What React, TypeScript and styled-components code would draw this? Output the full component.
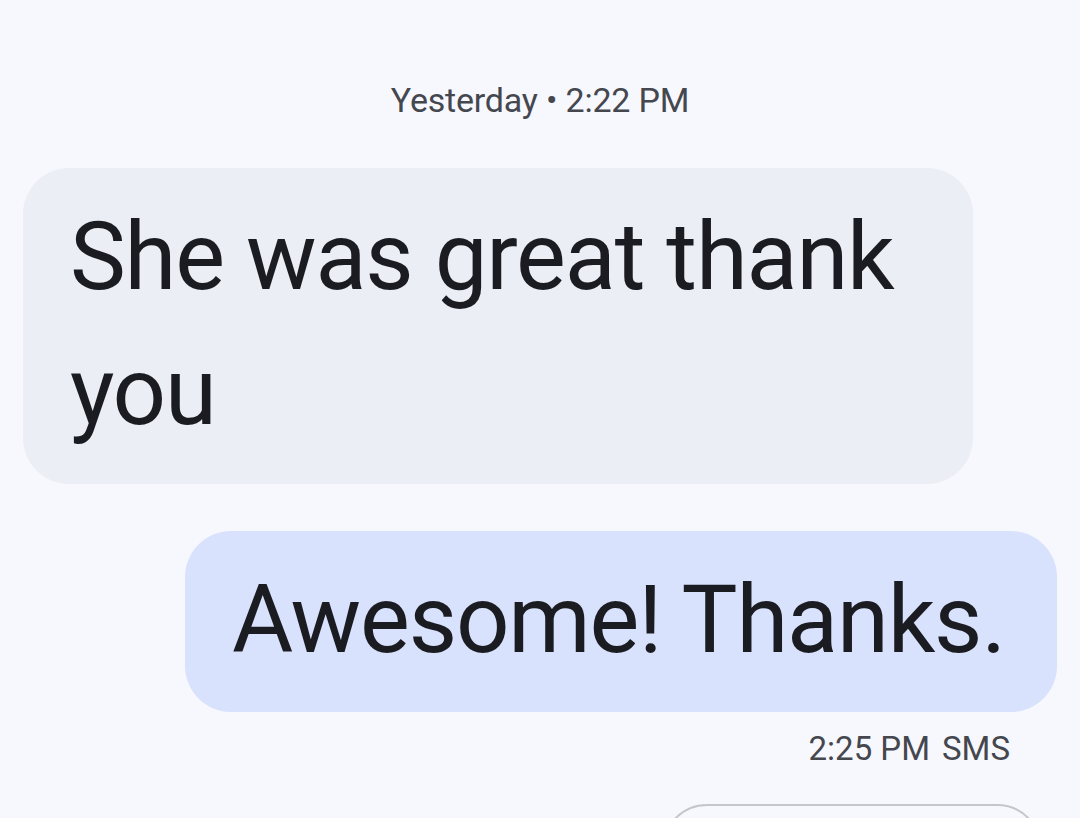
import React from 'react';
import styled, { createGlobalStyle } from 'styled-components';

const colors = {
  page: '#f7f8fd',
  incoming: '#eceef5',
  outgoing: '#d9e2fd',
  text: '#1b1c21',
  meta: '#45474f',
  outline: '#c5c6cc',
};

const GlobalStyle = createGlobalStyle`
  html, body {
    margin: 0;
    padding: 0;
    background: ${colors.page};
    overflow: hidden;
  }
  body {
    font-family: Roboto, "Noto Sans", sans-serif;
    color: ${colors.text};
  }
`;

const Thread = styled('main')`
  width: 1080px;
  height: 818px;
  display: flex;
  flex-direction: column;
  padding: 0 23px;
  box-sizing: border-box;
  overflow: hidden;
`;

const DayStamp = styled('div')`
  margin-top: 80px;
  text-align: center;
  font-size: 34px;
  line-height: 40px;
  color: ${colors.meta};
  letter-spacing: -0.2px;
`;

const Row = styled('div')<{ mine?: boolean }>`
  display: flex;
  justify-content: ${p => (p.mine ? 'flex-end' : 'flex-start')};
  margin-top: ${p => (p.mine ? 47 : 48)}px;
`;

const Bubble = styled('div')<{ mine?: boolean }>`
  box-sizing: border-box;
  max-width: 950px;
  width: ${p => (p.mine ? 'auto' : '950px')};
  padding: ${p => (p.mine ? '22px 52px 24px 47px' : '22px 47px 24px')};
  border-radius: 46px;
  background: ${p => (p.mine ? colors.outgoing : colors.incoming)};
  font-size: 94px;
  line-height: 135px;
  letter-spacing: -1.2px;
`;

const Meta = styled('div')`
  margin-top: 17px;
  display: flex;
  justify-content: flex-end;
  gap: 12px;
  padding-right: 47px;
  font-size: 33px;
  line-height: 40px;
  color: ${colors.meta};
`;

const NextChip = styled('div')`
  align-self: flex-end;
  margin-top: 35px;
  margin-right: 15px;
  width: 380px;
  height: 90px;
  flex-shrink: 0;
  box-sizing: border-box;
  border: 2px solid ${colors.outline};
  border-radius: 48px;
`;

function App() {
  return (
    <Thread>
      <GlobalStyle />
      <DayStamp>Yesterday • 2:22 PM</DayStamp>
      <Row>
        <Bubble>She was great thank you</Bubble>
      </Row>
      <Row mine>
        <Bubble mine>Awesome! Thanks.</Bubble>
      </Row>
      <Meta>
        <span>2:25 PM</span>
        <span>SMS</span>
      </Meta>
      <NextChip />
    </Thread>
  );
}

export default App;
